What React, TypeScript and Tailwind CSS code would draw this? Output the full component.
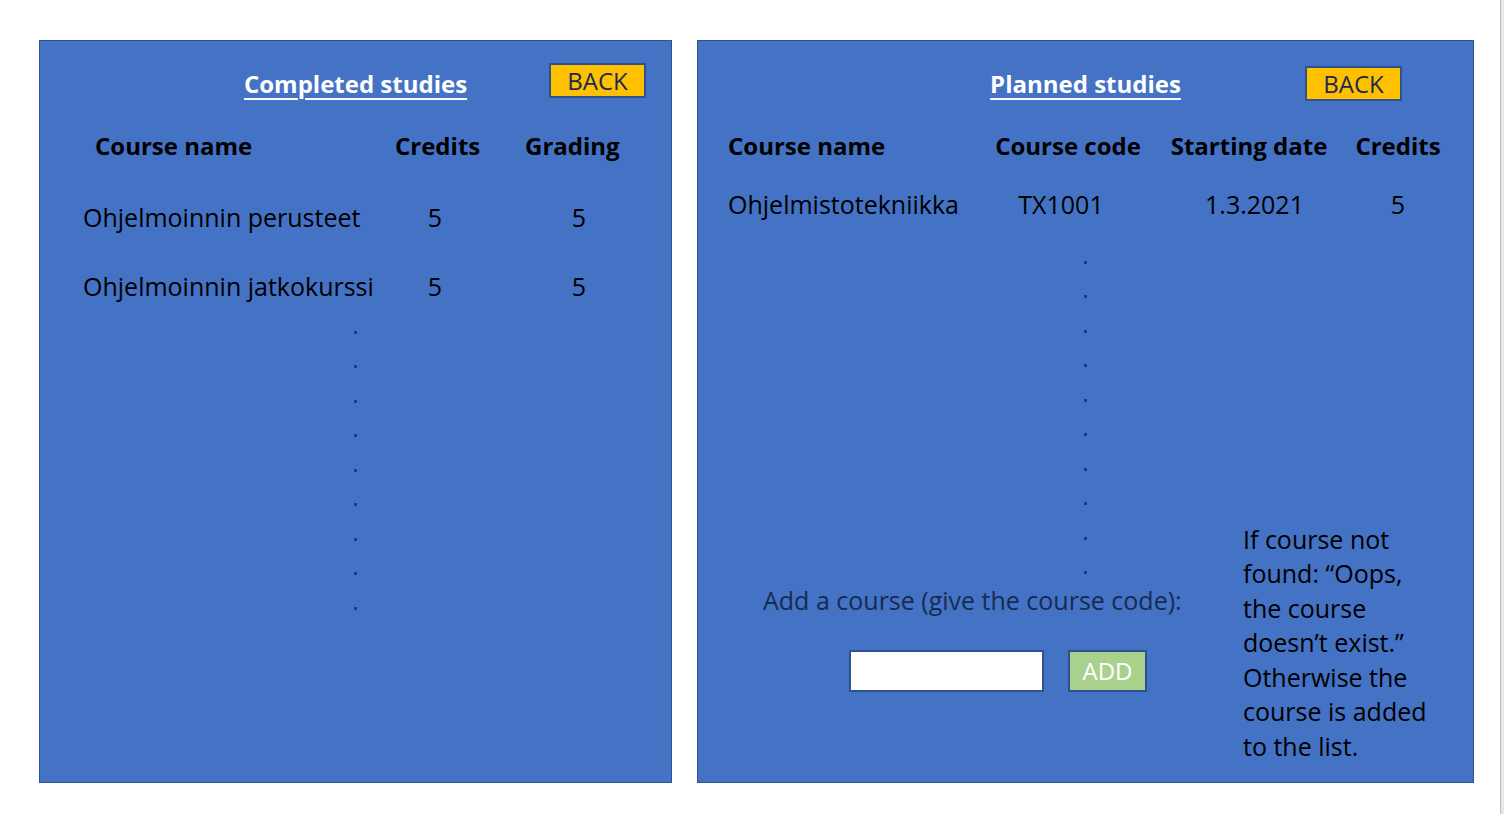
import React from "react";

const font = { fontFamily: "'Open Sans', Lato, sans-serif" };

function Dots({ count }: { count: number }) {
  return (
    <div className="flex flex-col gap-[31.5px]">
      {Array.from({ length: count }).map((_, i) => (
        <div key={i} className="w-[3px] h-[3px] bg-[#1f3864] rounded-[1px]" />
      ))}
    </div>
  );
}

function BackButton() {
  return (
    <div className="w-[97px] h-[35px] bg-[#ffc000] border-2 border-[#2f528f] flex items-center justify-center text-[24px] text-[#172b52] leading-none">
      BACK
    </div>
  );
}

export default function App() {
  return (
    <div
      className="w-[1504px] h-[814px] bg-white flex items-start text-black text-[25px]"
      style={font}
    >
      {/* Left panel */}
      <div className="ml-[39px] mt-[40px] w-[633px] h-[743px] bg-[#4472c4] border border-[#2f528f] flex flex-col">
        <div className="grid grid-cols-[1fr_auto_1fr] items-start pt-[22px] h-[60px]">
          <div />
          <div className="mt-[3px] h-[35px] leading-[35px] text-[24px] font-bold text-white underline underline-offset-[5px] decoration-2">
            Completed studies
          </div>
          <div className="flex justify-end pr-[25px]">
            <BackButton />
          </div>
        </div>
        <div className="mt-[25px] flex h-[40px] leading-[40px] text-[24px] font-bold">
          <div className="w-[355px] pl-[55px]">Course name</div>
          <div className="w-[80px] text-center">Credits</div>
          <div className="ml-[50px] w-[90px] text-center">Grading</div>
        </div>
        <div className="mt-[31px] flex h-[40px] leading-[40px]">
          <div className="w-[355px] pl-[43px] whitespace-nowrap">Ohjelmoinnin perusteet</div>
          <div className="w-[80px] text-center">5</div>
          <div className="ml-[64px] w-[80px] text-center">5</div>
        </div>
        <div className="mt-[29px] flex h-[40px] leading-[40px]">
          <div className="w-[355px] pl-[43px] whitespace-nowrap">Ohjelmoinnin jatkokurssi</div>
          <div className="w-[80px] text-center">5</div>
          <div className="ml-[64px] w-[80px] text-center">5</div>
        </div>
        <div className="mt-[24.5px] ml-[314px]">
          <Dots count={9} />
        </div>
      </div>

      {/* Right panel */}
      <div className="ml-[25px] mt-[40px] w-[777px] h-[743px] bg-[#4472c4] border border-[#2f528f] flex flex-col">
        <div className="grid grid-cols-[1fr_auto_1fr] items-start pt-[25px]">
          <div />
          <div className="h-[35px] leading-[35px] text-[24px] font-bold text-white underline underline-offset-[5px] decoration-2">
            Planned studies
          </div>
          <div className="flex justify-end pr-[71px]">
            <BackButton />
          </div>
        </div>
        <div className="mt-[25px] flex h-[40px] leading-[40px] text-[24px] font-bold">
          <div className="w-[270px] pl-[30px] whitespace-nowrap">Course name</div>
          <div className="w-[200px] text-center whitespace-nowrap">Course code</div>
          <div className="w-[162px] text-center whitespace-nowrap">Starting date</div>
          <div className="w-[136px] text-center">Credits</div>
        </div>
        <div className="mt-[18px] flex h-[40px] leading-[40px]">
          <div className="w-[270px] pl-[30px] whitespace-nowrap">Ohjelmistotekniikka</div>
          <div className="w-[186px] text-center">TX1001</div>
          <div className="w-[201px] text-center">1.3.2021</div>
          <div className="w-[86px] text-center">5</div>
        </div>
        <div className="flex">
          <div className="w-[545px] flex flex-col">
            <div className="mt-[36.5px] ml-[386px]">
              <Dots count={10} />
            </div>
            <div className="mt-[10.5px] ml-[65px] h-[30px] leading-[30px] text-[#172b52] whitespace-nowrap">
              Add a course (give the course code):
            </div>
            <div className="mt-[35px] ml-[151px] flex gap-[24px]">
              <div className="w-[195px] h-[42px] bg-white border-2 border-[#2f528f]" />
              <div className="w-[79px] h-[42px] bg-[#a9d18e] border-2 border-[#2f528f] flex items-center justify-center text-white text-[24px] leading-none">
                ADD
              </div>
            </div>
          </div>
          <div className="mt-[297.75px] leading-[34.5px] whitespace-nowrap">
            If course not
            <br />
            found: “Oops,
            <br />
            the course
            <br />
            doesn’t exist.”
            <br />
            Otherwise the
            <br />
            course is added
            <br />
            to the list.
          </div>
        </div>
      </div>

      <div className="ml-auto w-[4px] h-[814px] border-l border-[#bdbdbd] bg-[#e8e8e8]" />
    </div>
  );
}
